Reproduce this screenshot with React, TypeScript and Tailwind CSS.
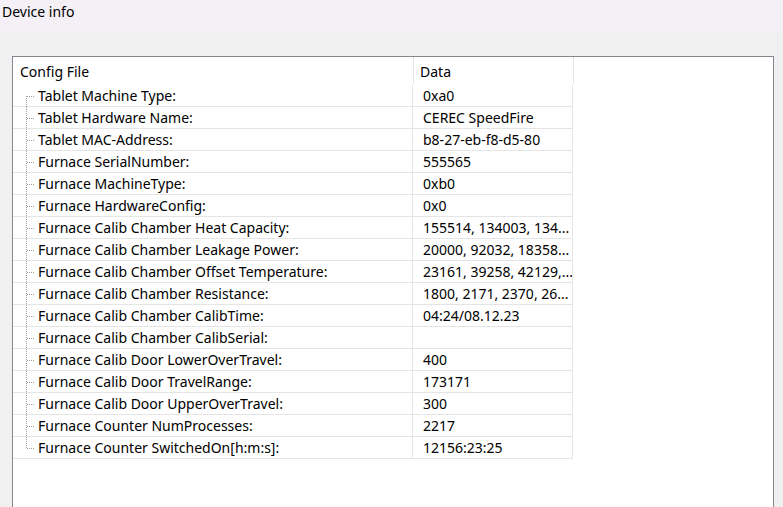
const rows: [string, string][] = [
  ["Tablet Machine Type:", "0xa0"],
  ["Tablet Hardware Name:", "CEREC SpeedFire"],
  ["Tablet MAC-Address:", "b8-27-eb-f8-d5-80"],
  ["Furnace SerialNumber:", "555565"],
  ["Furnace MachineType:", "0xb0"],
  ["Furnace HardwareConfig:", "0x0"],
  ["Furnace Calib Chamber Heat Capacity:", "155514, 134003, 134..."],
  ["Furnace Calib Chamber Leakage Power:", "20000, 92032, 18358..."],
  ["Furnace Calib Chamber Offset Temperature:", "23161, 39258, 42129,..."],
  ["Furnace Calib Chamber Resistance:", "1800, 2171, 2370, 26..."],
  ["Furnace Calib Chamber CalibTime:", "04:24/08.12.23"],
  ["Furnace Calib Chamber CalibSerial:", ""],
  ["Furnace Calib Door LowerOverTravel:", "400"],
  ["Furnace Calib Door TravelRange:", "173171"],
  ["Furnace Calib Door UpperOverTravel:", "300"],
  ["Furnace Counter NumProcesses:", "2217"],
  ["Furnace Counter SwitchedOn[h:m:s]:", "12156:23:25"],
];

// dotted tree connector for one row
function TreeLine({ first, last }: { first: boolean; last: boolean }) {
  return (
    <svg width="12" height="22" className="shrink-0" shapeRendering="crispEdges">
      <line
        x1="0.5"
        y1={first ? 11 : 0}
        x2="0.5"
        y2={last ? 12 : 22}
        stroke="#a0a0a0"
        strokeDasharray="1 1"
      />
      <line x1="1" y1="11.5" x2="9" y2="11.5" stroke="#a0a0a0" strokeDasharray="1 1" />
    </svg>
  );
}

export default function App() {
  return (
    <div
      className="w-[783px] h-[507px] overflow-hidden bg-[#f0f0f0] flex flex-col text-black"
      style={{ fontFamily: '"Noto Sans", "Open Sans", sans-serif' }}
    >
      <div className="h-[31px] shrink-0 bg-[#f5eff6] pl-[2px] pt-[3px] text-[14px] leading-[18px]">
        Device info
      </div>

      <div className="flex-1 pt-[25px] pl-[12px] pr-[9px]">
        <div className="h-full border border-b-0 border-[#868690] bg-white text-[14px]">
          {/* header */}
          <div className="flex h-[28px]">
            <div className="w-[401px] h-[27px] border-r border-[#e5e5e5] pl-[7px] pt-[2px] flex items-center">
              Config File
            </div>
            <div className="w-[160px] h-[27px] border-r border-[#e5e5e5] pl-[6px] pt-[2px] flex items-center">
              Data
            </div>
          </div>

          {rows.map(([label, value], i) => (
            <div key={label} className="flex h-[22px] border-b border-[#e5e5e5] w-[560px]">
              <div className="w-[400px] flex items-center pl-[13px] border-r border-[#e5e5e5]">
                <TreeLine first={i === 0} last={i === rows.length - 1} />
                <span className="whitespace-nowrap">{label}</span>
              </div>
              <div className="w-[160px] flex items-center pl-[10px] border-r border-[#e5e5e5] whitespace-nowrap overflow-hidden">
                {value}
              </div>
            </div>
          ))}
        </div>
      </div>
    </div>
  );
}
